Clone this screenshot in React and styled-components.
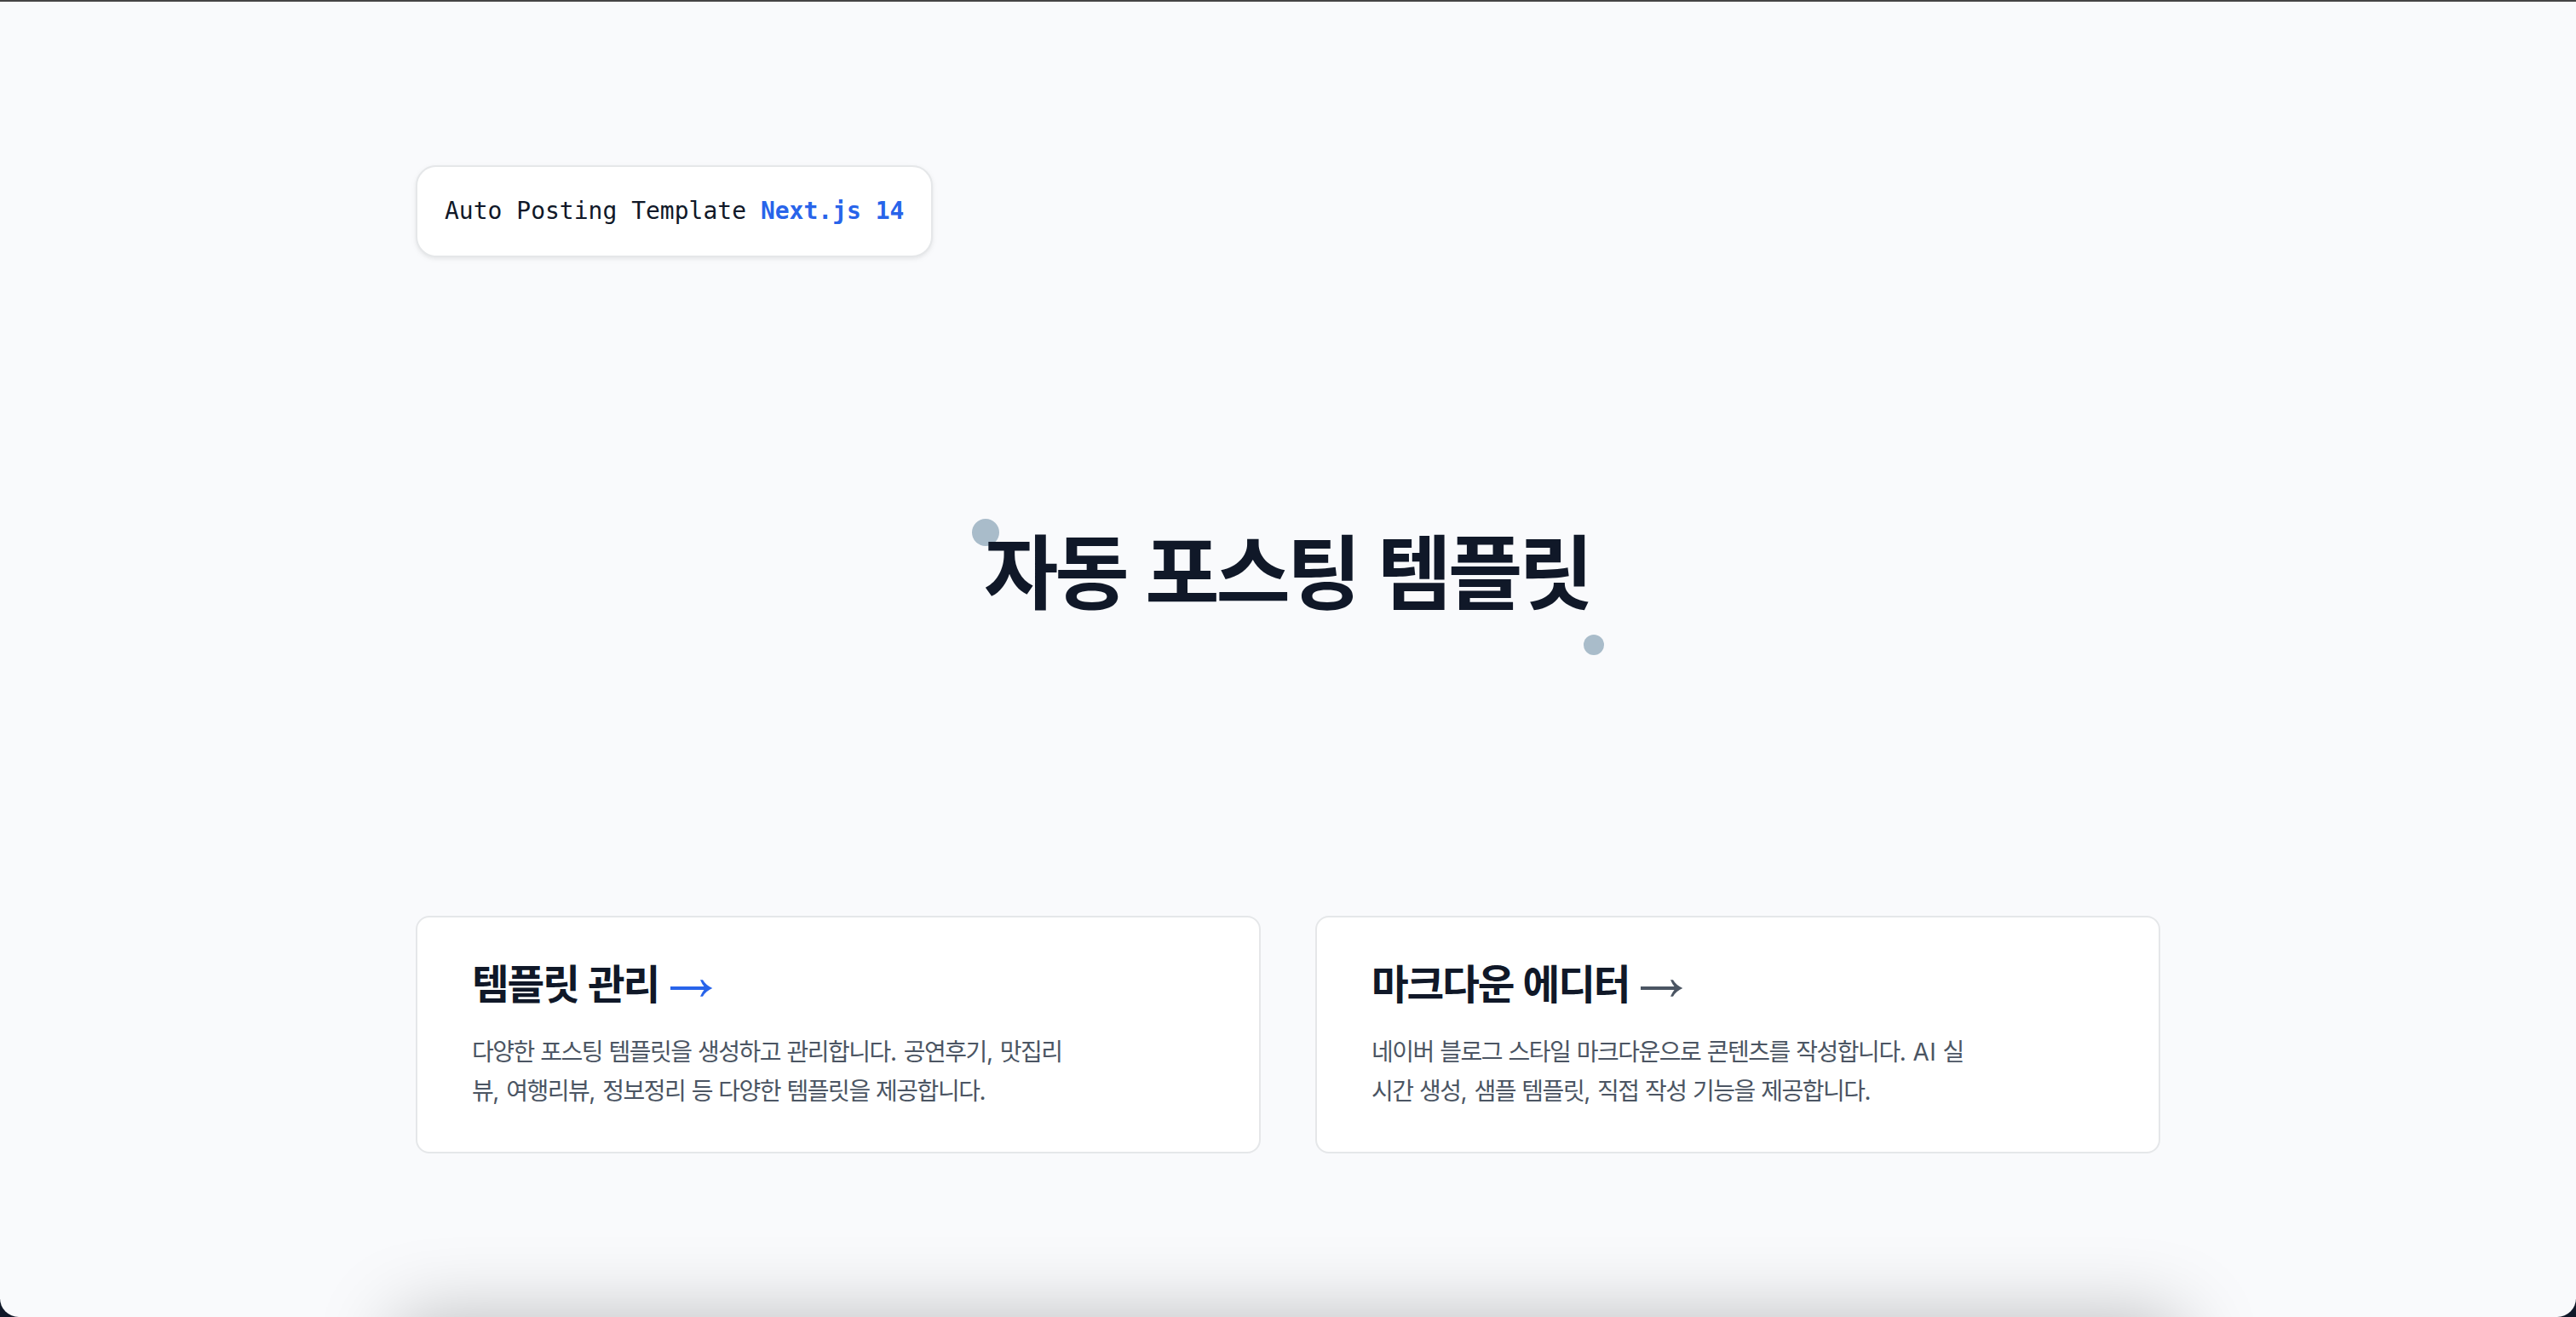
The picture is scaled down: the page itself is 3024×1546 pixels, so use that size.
import React from "react";
import styled, { createGlobalStyle } from "styled-components";

const Global = createGlobalStyle`
  * { box-sizing: border-box; margin: 0; }
  body { background: #101828; overflow: hidden; }
`;
const Page = styled.main`
  width: 3024px; height: 1546px; padding: 192px 488px 0;
  background: #f9fafc; border-top: 2px solid #454545;
  border-radius: 0 0 22px 22px; overflow: hidden;
  display: flex; flex-direction: column; position: relative;
  font-family: "Noto Sans CJK KR", sans-serif; color: #101828;
`;
const Badge = styled.p`
  align-self: flex-start; height: 108px; padding: 0 32px;
  display: flex; align-items: center; white-space: pre;
  font: 28px/40px "DejaVu Sans Mono", monospace;
  background: #fff; border: 2px solid #e5e7e9; border-radius: 24px;
  box-shadow: 0 2px 4px rgba(0,0,0,.05), 0 2px 8px rgba(0,0,0,.04);
`;
const Version = styled.strong`color: #2864ea;`;
const Hero = styled.section`
  height: 773px; display: flex; justify-content: center; padding-top: 323px;
`;
const TitleWrap = styled.div`
  position: relative; isolation: isolate; width: 710px; height: 128px;
`;
const Title = styled.h1`
  font-size: 95px; line-height: 84px; font-weight: 700; white-space: nowrap;
  letter-spacing: -4.2px; word-spacing: 5.5px; margin-left: -2px;
`;
const Dot = styled.span`
  position: absolute; width: ${p => p.$size}px; height: ${p => p.$size}px;
  left: ${p => p.$x}px; top: ${p => p.$y}px; border-radius: 50%;
  background: #a9bcca; z-index: -1;
`;
const Cards = styled.section`display: grid; grid-template-columns: 1fr 1fr; gap: 64px;`;
const Card = styled.a`
  height: 279px; padding: 44px 64px; background: #fff;
  border: 2px solid #e5e7e9; border-radius: 16px;
`;
const Heading = styled.h2`
  display: flex; align-items: center; height: 64px; margin-bottom: 26px;
  font-size: 47.5px; line-height: 64px; font-weight: 700; white-space: nowrap;
  letter-spacing: -2.1px; word-spacing: 2.5px;
`;
const ArrowIcon = styled.svg`
  width: 52px; height: 22px; margin: 14px 0 0 13px; color: ${p => p.$color};
`;
const Desc = styled.p`
  font-size: 28px; line-height: 45.5px; color: #4b5563;
  letter-spacing: -1.48px; word-spacing: 2.6px;
`;
const Line = styled.span`display: block; white-space: nowrap;`;
const Latin = styled.span`
  font-family: Inter, sans-serif; line-height: 1; letter-spacing: 0.4px;
`;
const Shadow = styled.div`
  position: absolute; left: 465px; top: 1544px; width: 2096px; height: 300px;
  border-radius: 20px; box-shadow: 0 0 90px rgba(0,0,0,.25);
`;

function Arrow({ color }) {
  return (
    <ArrowIcon $color={color} viewBox="0 0 52 22">
      <path
        d="M1 9H40.5Q38 6 36 1.3H39Q42.5 7.5 50.3 11Q42.5 14.5 39 20.7H36Q38 16 40.5 13H1Z"
        fill="currentColor"
      />
    </ArrowIcon>
  );
}

const cards = [
  {
    title: "템플릿 관리",
    color: "#2864ea",
    lines: [
      "다양한 포스팅 템플릿을 생성하고 관리합니다. 공연후기, 맛집리",
      "뷰, 여행리뷰, 정보정리 등 다양한 템플릿을 제공합니다.",
    ],
  },
  {
    title: "마크다운 에디터",
    color: "#4b5563",
    lines: [
      "네이버 블로그 스타일 마크다운으로 콘텐츠를 작성합니다. AI 실",
      "시간 생성, 샘플 템플릿, 직접 작성 기능을 제공합니다.",
    ],
  },
];

// Latin letters and punctuation keep their natural spacing beside tightened Hangul.
function MixedText({ children }) {
  return children
    .split(/([A-Za-z.,]+)/)
    .map((part, i) => (i % 2 ? <Latin key={i}>{part}</Latin> : part));
}

export default function App() {
  return (
    <>
      <Global />
      <Page>
        <Badge>Auto Posting Template <Version>Next.js 14</Version></Badge>
        <Hero>
          <TitleWrap>
            <Dot $size={32} $x={-16} $y={-16} />
            <Title>자동 포스팅 템플릿</Title>
            <Dot $size={24} $x={702} $y={120} />
          </TitleWrap>
        </Hero>
        <Cards>
          {cards.map(c => (
            <Card key={c.title}>
              <Heading>{c.title}<Arrow color={c.color} /></Heading>
              <Desc>
                {c.lines.map(line => (
                  <Line key={line}><MixedText>{line}</MixedText></Line>
                ))}
              </Desc>
            </Card>
          ))}
        </Cards>
        <Shadow />
      </Page>
    </>
  );
}
